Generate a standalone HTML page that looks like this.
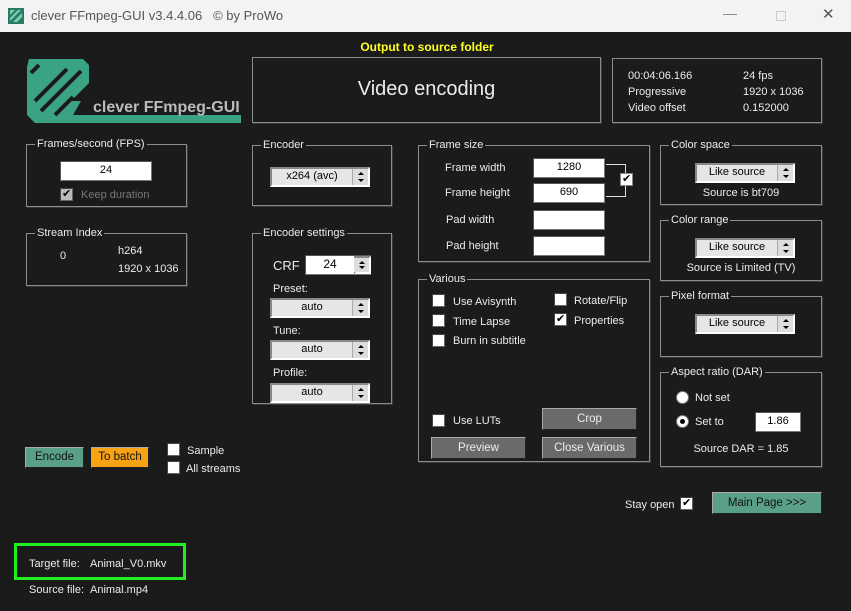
<!DOCTYPE html>
<html><head><meta charset="utf-8"><style>
*{box-sizing:border-box;margin:0;padding:0}
body{width:851px;height:611px;overflow:hidden;background:#1b1b1b;font-family:"Liberation Sans",sans-serif;font-size:11px;color:#ececec;position:relative}
.a{position:absolute;white-space:nowrap}
.g{position:absolute;border:1px solid #8c8c8c;box-shadow:1px 1px 0 #3a3a3a}
.g>.l{position:absolute;top:-8px;left:8px;background:#1b1b1b;padding:0 2px;line-height:14px}
.in{position:absolute;background:#fff;color:#000;border:1px solid #777;border-top-color:#555;border-left-color:#555;text-align:center;line-height:17px}
.cb{position:absolute;background:#e6e6e6;color:#000;border:2px solid;border-color:#888 #fff #fff #888;text-align:center;line-height:15px;padding-right:16px}
.cb i{position:absolute;right:0;top:0;width:16px;height:100%;background:#ddd;border-left:1px solid #aaa}
.cb i:before,.cb i:after{content:"";position:absolute;left:5px;border-left:3px solid transparent;border-right:3px solid transparent}
.cb i:before{top:3px;border-bottom:3px solid #000}
.cb i:after{bottom:3px;border-top:3px solid #000}
.chk{position:absolute;width:13px;height:13px;background:#fff;border:1px solid #666;border-top-color:#444;border-left-color:#444}
.chk.x:after{content:"✔";position:absolute;left:1px;top:-2px;font-size:11px;color:#000}
.btn{position:absolute;background:#6a6a6a;border:1px solid;border-color:#aaa #222 #222 #aaa;text-align:center;color:#eee;font-size:11.5px}
.rad{position:absolute;width:13px;height:13px;border-radius:50%;background:#fff;border:1px solid #777}
</style></head><body>
<div class="a" style="left:0;top:0;width:851px;height:32px;background:#f3f3f3"></div>
<svg class="a" style="left:8px;top:8px" width="16" height="16"><rect width="16" height="16" fill="#2b7a66"/><path d="M2 2h5L2 7zM5 14l9-9v4l-5 5zM2 10l8-8h3L2 13z" fill="#7fd0b4"/></svg>
<div class="a" style="left:31px;top:8px;color:#555;font-size:13px">clever FFmpeg-GUI v3.4.4.06 &nbsp;&nbsp;© by ProWo</div>
<div class="a" style="left:723px;top:5px;color:#888;font-size:14px">—</div>
<div class="a" style="left:776px;top:11px;width:10px;height:10px;border:1px solid #ccc"></div>
<div class="a" style="left:822px;top:5px;color:#555;font-size:15px">✕</div>

<svg class="a" style="left:27px;top:57px" width="216" height="68">
<path d="M2 2H56L62 8V26L44 44H58V58H214V66H8L0 58V10z" fill="#3aa384"/>
<g stroke="#1b1b1b" stroke-width="4" fill="none">
<line x1="40" y1="12" x2="8" y2="44"/>
<line x1="54" y1="14" x2="14" y2="54"/>
<line x1="46" y1="40" x2="28" y2="58"/>
<line x1="12" y1="8" x2="4" y2="16"/>
</g>
<path d="M62 30V58H46z" fill="#1b1b1b"/>
<text x="66" y="55" font-family="Liberation Sans" font-weight="bold" font-size="16" fill="#bbb">clever FFmpeg-GUI</text>
</svg>

<div class="a" style="left:252px;top:40px;width:350px;text-align:center;color:#ffff22;font-weight:bold;font-size:12px">Output to source folder</div>
<div class="g" style="left:252px;top:57px;width:349px;height:66px"><div class="a" style="left:0;right:0;top:20px;text-align:center;font-size:20px">Video encoding</div></div>
<div class="g" style="left:612px;top:58px;width:210px;height:65px">
<div class="a" style="left:15px;top:9px;line-height:16px">00:04:06.166<br>Progressive<br>Video offset</div>
<div class="a" style="left:130px;top:9px;line-height:16px">24 fps<br>1920 x 1036<br>0.152000</div></div>

<div class="g" style="left:26px;top:144px;width:161px;height:63px"><span class="l">Frames/second (FPS)</span>
<div class="in" style="left:33px;top:16px;width:92px;height:20px">24</div>
<div class="chk x" style="left:33px;top:43px;background:#bbb"></div><div class="a" style="left:54px;top:44px;color:#777">Keep duration</div></div>
<div class="g" style="left:26px;top:233px;width:161px;height:53px"><span class="l">Stream Index</span>
<div class="a" style="left:33px;top:16px">0</div><div class="a" style="left:91px;top:8px;line-height:18px">h264<br>1920 x 1036</div></div>

<div class="g" style="left:252px;top:145px;width:140px;height:61px"><span class="l">Encoder</span>
<div class="cb" style="left:17px;top:21px;width:100px;height:20px">x264 (avc)<i></i></div></div>
<div class="g" style="left:252px;top:233px;width:140px;height:171px"><span class="l">Encoder settings</span>
<div class="a" style="left:20px;top:24px;font-size:13px">CRF</div>
<div class="in" style="left:52px;top:21px;width:66px;height:20px;padding-right:16px;font-size:12px">24</div><div class="cb" style="left:101px;top:22px;width:17px;height:18px;padding:0"><i style="width:15px;border:0"></i></div>
<div class="a" style="left:20px;top:49px">Preset:</div><div class="cb" style="left:17px;top:64px;width:100px;height:20px">auto<i></i></div>
<div class="a" style="left:20px;top:91px">Tune:</div><div class="cb" style="left:17px;top:106px;width:100px;height:20px">auto<i></i></div>
<div class="a" style="left:20px;top:133px">Profile:</div><div class="cb" style="left:17px;top:149px;width:100px;height:20px">auto<i></i></div></div>

<div class="g" style="left:418px;top:145px;width:232px;height:117px"><span class="l">Frame size</span>
<div class="a" style="left:26px;top:16px">Frame width</div><div class="a" style="left:26px;top:41px">Frame height</div>
<div class="a" style="left:27px;top:68px">Pad width</div><div class="a" style="left:27px;top:94px">Pad height</div>
<div class="in" style="left:114px;top:12px;width:72px;height:20px">1280</div>
<div class="in" style="left:114px;top:37px;width:72px;height:20px">690</div>
<div class="in" style="left:114px;top:64px;width:72px;height:20px"></div>
<div class="in" style="left:114px;top:90px;width:72px;height:20px"></div>
<div class="a" style="left:187px;top:18px;width:20px;height:33px;border:1px solid #ddd;border-left:0"></div>
<div class="chk x" style="left:201px;top:27px;border-color:#888"></div></div>

<div class="g" style="left:418px;top:279px;width:232px;height:183px"><span class="l">Various</span>
<div class="chk" style="left:13px;top:14px"></div><div class="a" style="left:34px;top:16px">Use Avisynth</div>
<div class="chk" style="left:13px;top:34px"></div><div class="a" style="left:34px;top:36px">Time Lapse</div>
<div class="chk" style="left:13px;top:54px"></div><div class="a" style="left:34px;top:55px">Burn in subtitle</div>
<div class="chk" style="left:135px;top:13px"></div><div class="a" style="left:155px;top:15px">Rotate/Flip</div>
<div class="chk x" style="left:135px;top:33px"></div><div class="a" style="left:155px;top:35px">Properties</div>
<div class="chk" style="left:13px;top:134px"></div><div class="a" style="left:34px;top:135px">Use LUTs</div>
<div class="btn" style="left:123px;top:128px;width:95px;height:22px;line-height:20px">Crop</div>
<div class="btn" style="left:12px;top:157px;width:95px;height:22px;line-height:20px">Preview</div>
<div class="btn" style="left:123px;top:157px;width:95px;height:22px;line-height:20px">Close Various</div></div>

<div class="g" style="left:660px;top:145px;width:162px;height:60px"><span class="l">Color space</span>
<div class="cb" style="left:34px;top:17px;width:100px;height:20px">Like source<i></i></div><div class="a" style="left:0;right:0;top:41px;text-align:center">Source is bt709</div></div>
<div class="g" style="left:660px;top:220px;width:162px;height:61px"><span class="l">Color range</span>
<div class="cb" style="left:34px;top:17px;width:100px;height:20px">Like source<i></i></div><div class="a" style="left:0;right:0;top:41px;text-align:center">Source is Limited (TV)</div></div>
<div class="g" style="left:660px;top:296px;width:162px;height:61px"><span class="l">Pixel format</span>
<div class="cb" style="left:34px;top:17px;width:100px;height:20px">Like source<i></i></div></div>
<div class="g" style="left:660px;top:372px;width:162px;height:95px"><span class="l">Aspect ratio (DAR)</span>
<div class="rad" style="left:15px;top:18px"></div><div class="a" style="left:34px;top:19px">Not set</div>
<div class="rad" style="left:15px;top:42px"><div class="a" style="left:3px;top:3px;width:5px;height:5px;border-radius:50%;background:#000"></div></div><div class="a" style="left:34px;top:43px">Set to</div>
<div class="in" style="left:94px;top:39px;width:46px;height:20px">1.86</div>
<div class="a" style="left:0;right:0;top:70px;text-align:center">Source DAR = 1.85</div></div>

<div class="btn" style="left:25px;top:447px;width:59px;height:21px;line-height:19px;background:#5aa088;color:#111">Encode</div>
<div class="btn" style="left:91px;top:447px;width:58px;height:21px;line-height:19px;background:#f8a314;color:#111">To batch</div>
<div class="chk" style="left:167px;top:443px"></div><div class="a" style="left:187px;top:445px">Sample</div>
<div class="chk" style="left:167px;top:461px"></div><div class="a" style="left:186px;top:463px">All streams</div>

<div class="a" style="left:625px;top:499px">Stay open</div><div class="chk x" style="left:680px;top:497px"></div>
<div class="btn" style="left:712px;top:492px;width:110px;height:22px;line-height:20px;background:#5aa088;color:#111">Main Page &gt;&gt;&gt;</div>

<div class="a" style="left:14px;top:543px;width:172px;height:37px;border:3px solid #22ee22"></div>
<div class="a" style="left:29px;top:558px">Target file:</div><div class="a" style="left:90px;top:558px">Animal_V0.mkv</div>
<div class="a" style="left:29px;top:584px">Source file:</div><div class="a" style="left:90px;top:584px">Animal.mp4</div>
</body></html>
